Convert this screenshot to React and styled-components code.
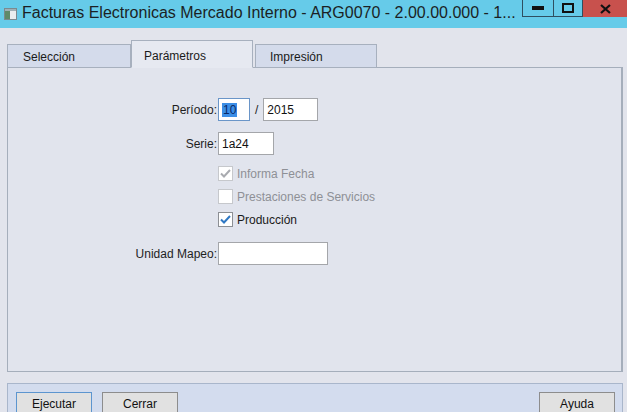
import React from 'react';
import styled, { createGlobalStyle } from 'styled-components';

const GlobalStyle = createGlobalStyle`
  html, body {
    margin: 0;
    padding: 0;
    background: #e2e4ec;
  }
  body {
    font-family: "Liberation Sans", Arial, sans-serif;
  }
`;

const Window = styled.div`
  width: 627px;
  height: 412px;
  overflow: hidden;
  display: flex;
  flex-direction: column;
  background: #e2e4ec;
`;

const TitleBar = styled.div`
  height: 28px;
  flex: none;
  display: flex;
  align-items: flex-start;
  background: #66cbe9;
`;

const AppIcon = styled.svg`
  margin: 8px 5px 0 4px;
  flex: none;
`;

const TitleText = styled.div`
  flex: 1;
  min-width: 0;
  padding-top: 4px;
  font-size: 16px;
  color: #1b1f24;
  white-space: nowrap;
`;

const Controls = styled.div`
  display: flex;
  flex: none;
`;

const CtrlButton = styled.div`
  width: ${p => p.$w}px;
  height: 17px;
  display: flex;
  align-items: center;
  justify-content: center;
  background: ${p => (p.$close ? '#c8514d' : 'transparent')};
  border: ${p => (p.$close ? 'none' : '1px solid #2f4f60')};
  border-top: none;
  box-sizing: border-box;
  & + & {
    border-left: ${p => (p.$close ? 'none' : '0')};
  }
`;

const Body = styled.div`
  flex: 1;
  display: flex;
  flex-direction: column;
  padding: 13px 4px 0 7px;
`;

const TabStrip = styled.div`
  display: flex;
  align-items: flex-end;
  height: 27px;
  margin-bottom: -1px;
  position: relative;
  z-index: 1;
`;

const Tab = styled.div`
  width: ${p => p.$w}px;
  height: ${p => (p.$active ? 28 : 24)}px;
  margin-right: ${p => p.$mr || 0}px;
  box-sizing: border-box;
  padding-left: ${p => p.$pl}px;
  padding-top: ${p => (p.$active ? 8 : 5)}px;
  font-size: 12px;
  color: #1a1a1a;
  background: ${p => (p.$active ? '#e6e9f1' : '#d4dbeb')};
  border: 1px solid #a7b0be;
  border-bottom: ${p => (p.$active ? '1px solid #e6e9f1' : '1px solid #a7b0be')};
`;

const Panel = styled.div`
  height: 305px;
  box-sizing: border-box;
  border: 1px solid #a5aebb;
  border-right: 2px solid #a5aebb;
  background: #e1e4ed;
  padding-top: 30px;
  display: flex;
  flex-direction: column;
`;

const Row = styled.div`
  display: flex;
  align-items: center;
  height: ${p => p.$h || 23}px;
  margin-top: ${p => p.$top || 0}px;
`;

const Label = styled.div`
  width: 209px;
  flex: none;
  text-align: right;
  font-size: 12px;
  color: #1e1e1e;
  padding-right: 1px;
`;

const Field = styled.div`
  width: ${p => p.$w}px;
  height: 23px;
  box-sizing: border-box;
  background: #ffffff;
  border: 1px solid ${p => (p.$focus ? '#6a95c8' : '#a4a6aa')};
  font-size: 12px;
  color: #111;
  padding: 4px 0 0 3px;
`;

const Selected = styled.span`
  background: #3c8ee6;
  color: #0a2a66;
  padding: 0 1px;
`;

const Slash = styled.span`
  font-size: 12px;
  margin: 0 5px 0 5px;
  color: #222;
`;

const Check = styled.div`
  width: 15px;
  height: 15px;
  box-sizing: border-box;
  background: #fff;
  border: 1px solid ${p => (p.$disabled ? '#c6c8cc' : '#8c8f94')};
  margin: 0 4px 0 210px;
  display: flex;
  align-items: center;
  justify-content: center;
`;

const CheckText = styled.span`
  font-size: 12px;
  color: ${p => (p.$disabled ? '#8e9096' : '#1a1a1a')};
`;

const Footer = styled.div`
  margin-top: 11px;
  flex: 1;
  background: #d3dcee;
  border: 1px solid #a9b6cb;
  border-bottom: none;
  display: flex;
  padding: 8px 0 0 8px;
`;

const Button = styled.div`
  width: 76px;
  height: 23px;
  box-sizing: border-box;
  margin-right: ${p => p.$mr || 0}px;
  margin-left: ${p => (p.$right ? 'auto' : '0')};
  background: #e1e1e1;
  border: 1px solid ${p => (p.$default ? '#5c95cf' : '#8d8d8d')};
  font-size: 12px;
  color: #111;
  text-align: center;
  padding-top: 4px;
`;

const Tick = ({ color }) => (
  <svg width="11" height="9" viewBox="0 0 11 9">
    <path d="M1 4.5 L4 7.5 L10 1" fill="none" stroke={color} strokeWidth="2" />
  </svg>
);

const CheckRow = ({ checked, disabled, children }) => (
  <Row>
    <Check $disabled={disabled}>
      {checked && <Tick color={disabled ? '#a9abb0' : '#2f78c4'} />}
    </Check>
    <CheckText $disabled={disabled}>{children}</CheckText>
  </Row>
);

const App = () => {
  return (
    <Window>
      <GlobalStyle />
      <TitleBar>
        <AppIcon width="13" height="12" viewBox="0 0 13 12">
          <rect x="0.5" y="0.5" width="12" height="11" fill="#e8eef0" stroke="#7a8a90" />
          <rect x="1" y="1" width="5" height="10" fill="#5f8a6a" />
          <rect x="1" y="1" width="11" height="2" fill="#9fb0b6" />
        </AppIcon>
        <TitleText>Facturas Electronicas Mercado Interno - ARG0070 - 2.00.00.000 - 1...</TitleText>
        <Controls>
          <CtrlButton $w={32}>
            <svg width="12" height="4"><rect width="12" height="4" fill="#111" /></svg>
          </CtrlButton>
          <CtrlButton $w={29}>
            <svg width="12" height="10"><rect x="1" y="1" width="10" height="8" fill="none" stroke="#111" strokeWidth="2" /></svg>
          </CtrlButton>
          <CtrlButton $w={44} $close>
            <svg width="11" height="10"><path d="M1 1 L10 9 M10 1 L1 9" stroke="#111" strokeWidth="2.2" /></svg>
          </CtrlButton>
        </Controls>
      </TitleBar>
      <Body>
        <TabStrip>
          <Tab $w={124} $pl={15}>Selección</Tab>
          <Tab $w={122} $pl={12} $mr={2} $active>Parámetros</Tab>
          <Tab $w={122} $pl={14}>Impresión</Tab>
        </TabStrip>
        <Panel>
          <Row>
            <Label>Período:</Label>
            <Field $w={32} $focus><Selected>10</Selected></Field>
            <Slash>/</Slash>
            <Field $w={55}>2015</Field>
          </Row>
          <Row $top={11}>
            <Label>Serie:</Label>
            <Field $w={56}>1a24</Field>
          </Row>
          <Row $h={7} />
          <CheckRow checked disabled>Informa Fecha</CheckRow>
          <CheckRow disabled>Prestaciones de Servicios</CheckRow>
          <CheckRow checked>Producción</CheckRow>
          <Row $top={11}>
            <Label>Unidad Mapeo:</Label>
            <Field $w={110} />
          </Row>
        </Panel>
        <Footer>
          <Button $default $mr={10}>Ejecutar</Button>
          <Button>Cerrar</Button>
          <Button $right $mr={7}>Ayuda</Button>
        </Footer>
      </Body>
    </Window>
  );
};

export default App;
